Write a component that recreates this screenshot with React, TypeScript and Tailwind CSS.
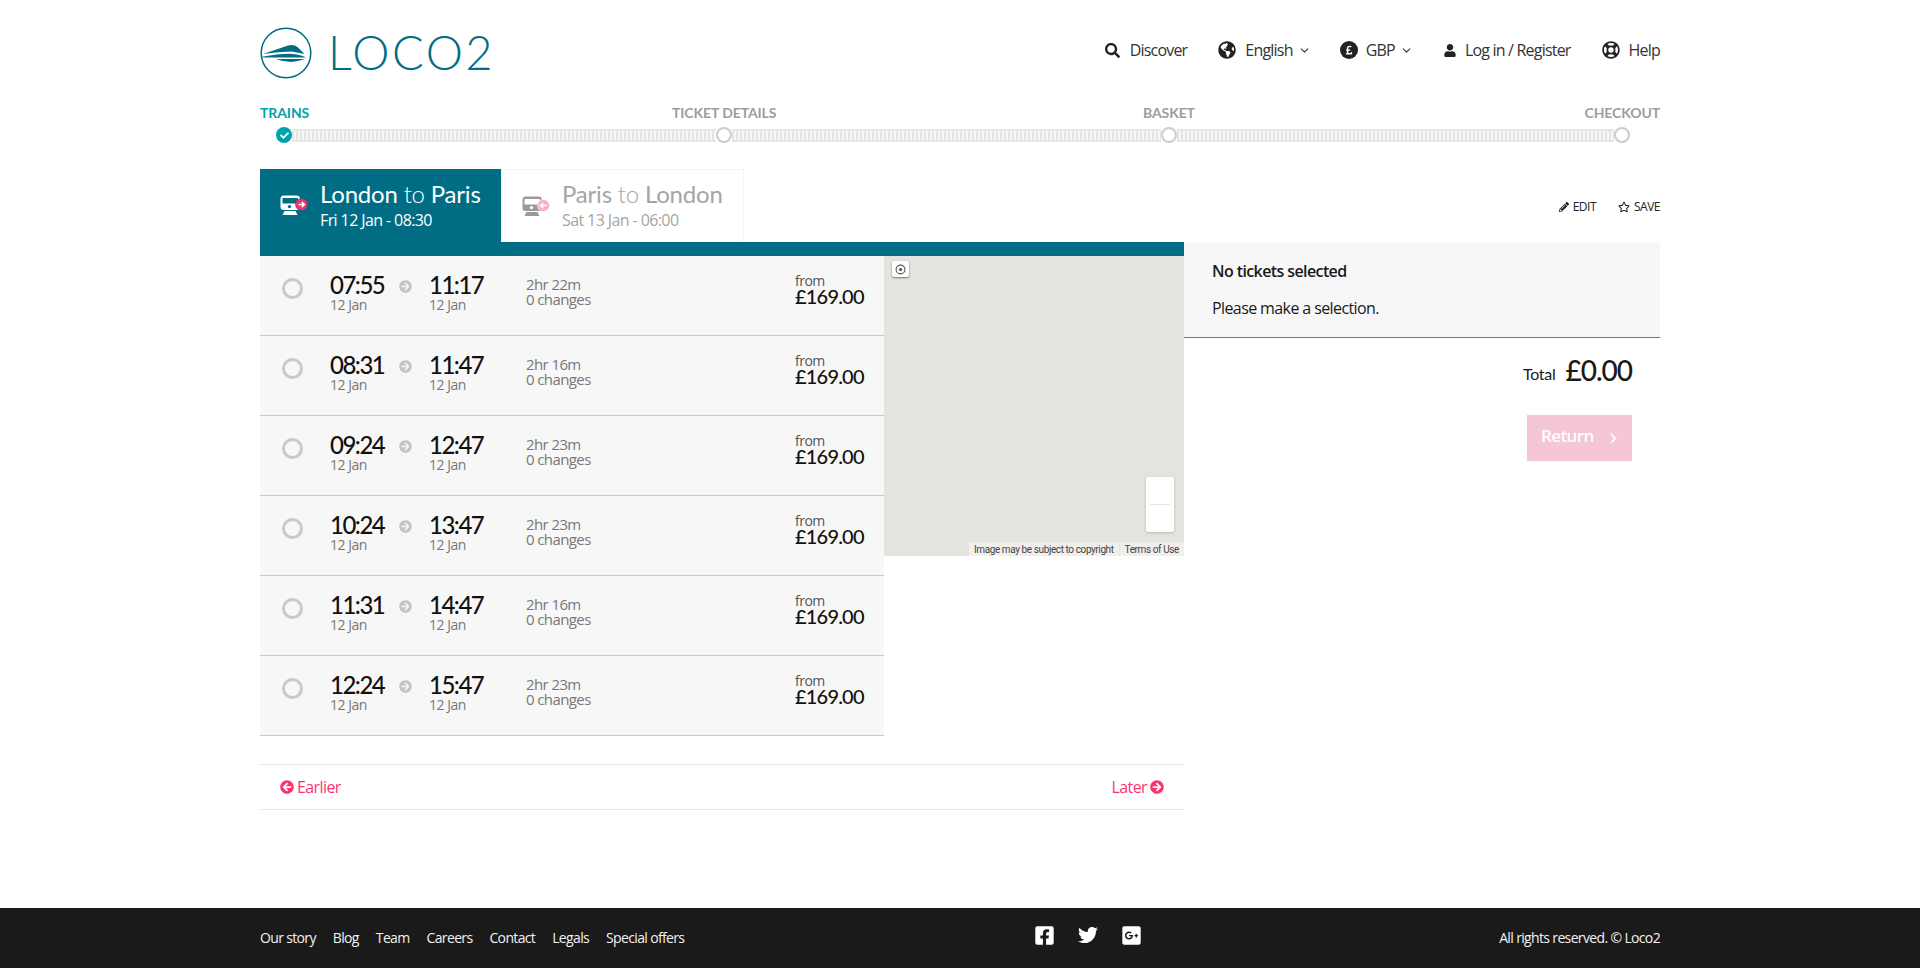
import React from "react";
import {
  FaSearch, FaGlobeAmericas, FaUser, FaRegLifeRing, FaPencilAlt, FaRegStar,
  FaArrowCircleRight, FaArrowCircleLeft, FaChevronRight, FaFacebookSquare,
  FaTwitter, FaGooglePlusSquare, FaCheck, FaPoundSign,
} from "react-icons/fa";
import { ChevronDown } from "lucide-react";

const OPEN = "font-['Open_Sans',sans-serif]";
const LATO = "font-['Lato',sans-serif]";

const rows = [
  ["07:55", "11:17", "2hr 22m"],
  ["08:31", "11:47", "2hr 16m"],
  ["09:24", "12:47", "2hr 23m"],
  ["10:24", "13:47", "2hr 23m"],
  ["11:31", "14:47", "2hr 16m"],
  ["12:24", "15:47", "2hr 23m"],
];

function Logo() {
  return (
    <svg width="52" height="52" viewBox="0 0 52 52" fill="none" className="shrink-0">
      <circle cx="26" cy="26" r="24.8" stroke="#006d84" strokeWidth="1.5" />
      <path d="M3 27 L28 18.5 Q34 17 38 20.5 L44.5 27 L32 24.5 Q18 24.5 3 27 Z" fill="#006d84" />
      <path d="M2 29.8 Q18 26.8 30 26.8 Q40 27.3 46 30.5 L2 30.5 Z" fill="#006d84" />
      <path d="M16 32 L45 32 Q38 34.5 31 35 Q23 34.8 16 32 Z" fill="#006d84" />
    </svg>
  );
}

function TrainIcon({ body, dot, badge, dir }: { body: string; dot: string; badge: string; dir: "r" | "l" }) {
  return (
    <svg width="28" height="21" viewBox="0 0 28 21" className="shrink-0">
      <path d="M3.5 0.5 H16.5 Q20 0.5 20 4 V12 Q20 15 17 15 H3.5 Q0.5 15 0.5 12 V4 Q0.5 0.5 3.5 0.5 Z" fill={body} />
      <rect x="2.5" y="3" width="15.5" height="5.5" rx="0.5" fill={dot} />
      <circle cx="9.5" cy="11.6" r="1.7" fill={dot} />
      <path d="M4.5 16 H15.5 L17.5 20 H2.5 Z" fill={body} />
      <circle cx="21.5" cy="9.5" r="6" fill={badge} stroke={dot} strokeWidth="0.6" />
      {dir === "r" ? (
        <path d="M18.5 9.5 H24 M21.8 7 L24.4 9.5 L21.8 12" stroke="#fff" strokeWidth="1.6" fill="none" />
      ) : (
        <path d="M24.5 9.5 H19 M21.2 7 L18.6 9.5 L21.2 12" stroke="#fff" strokeWidth="1.6" fill="none" />
      )}
    </svg>
  );
}

function Track({ w }: { w: string }) {
  return (
    <div className={`${w} h-[13px] border-y-2 border-[#e6e6e6] bg-[repeating-linear-gradient(90deg,#e4e4e4_0,#e4e4e4_2px,#f8f8f8_2px,#f8f8f8_4px)]`} />
  );
}

function Dot() {
  return <div className="w-[16px] h-[16px] rounded-full border-2 border-[#cccccc] bg-white shrink-0" />;
}

export default function App() {
  return (
    <div className={`min-h-[968px] flex flex-col bg-white text-[#1a1a1a] ${OPEN}`}>
      <div className="w-[1400px] mx-auto">
        {/* Header */}
        <header className="flex items-center justify-between pt-[27px] h-[79px]">
          <div className="flex items-center">
            <Logo />
            <span className={`${LATO} ml-[16px] -mt-[2px] text-[#006d84] text-[47px] leading-[52px] font-light tracking-[2.5px]`}>LOCO2</span>
          </div>
          <nav className="flex items-center gap-[31px] text-[16px] tracking-[-0.8px] text-[#333333] -mt-[6px]">
            <a className="flex items-center gap-[10px]"><FaSearch className="w-[15px] h-[15px] text-[#222222]" />Discover</a>
            <a className="flex items-center"><FaGlobeAmericas className="w-[18px] h-[18px] mr-[9px] text-[#222222]" />English<ChevronDown className="w-[13px] h-[13px] ml-[5px]" /></a>
            <a className="flex items-center -ml-[2px]">
              <span className="w-[18px] h-[18px] rounded-full bg-[#222222] flex items-center justify-center mr-[8px]"><FaPoundSign className="w-[10px] h-[10px] text-white" /></span>
              GBP<ChevronDown className="w-[13px] h-[13px] ml-[5px]" />
            </a>
            <a className="flex items-center gap-[9px]"><FaUser className="w-[12px] h-[13px] text-[#222222]" />Log in / Register</a>
            <a className="flex items-center gap-[9px]"><FaRegLifeRing className="w-[18px] h-[18px] text-[#222222]" />Help</a>
          </nav>
        </header>

        {/* Steps */}
        <div className={`${LATO} mt-[25px] flex text-[14px] leading-[17px] font-bold text-[#9d9d9d] tracking-[-0.1px]`}>
          <span className="text-[#00a3ad] w-[412px]">TRAINS</span>
          <span className="w-[471px]">TICKET DETAILS</span>
          <span className="w-[439px]">BASKET</span>
          <span className="flex-1 text-right">CHECKOUT</span>
        </div>
        <div className="mt-[6px] flex items-center pl-[16px] h-[16px]">
          <div className="w-[16px] h-[16px] rounded-full bg-[#00a3ad] flex items-center justify-center shrink-0"><FaCheck className="w-[9px] h-[9px] text-white" /></div>
          <Track w="w-[424px]" />
          <Dot />
          <Track w="w-[429px]" />
          <Dot />
          <Track w="w-[437px]" />
          <Dot />
        </div>

        {/* Tabs */}
        <div className="mt-[26px] flex items-start">
          <div className="w-[241px] h-[73px] bg-[#006d84] text-white flex items-center pl-[20px] gap-[12px]">
            <TrainIcon body="#ffffff" dot="#006d84" badge="#f0336f" dir="r" />
            <div className="pb-[2px]">
              <div className={`${LATO} text-[24px] leading-[30px] tracking-[-0.2px]`}>London <span className="font-light">to</span> Paris</div>
              <div className="mt-[1px] text-[16px] leading-[20px] tracking-[-0.6px]">Fri 12 Jan - 08:30</div>
            </div>
          </div>
          <div className="w-[243px] h-[73px] bg-white border border-b-0 border-[#f5f5f5] text-[#a5a5a5] flex items-center pl-[20px] gap-[12px]">
            <TrainIcon body="#9a9a9a" dot="#ffffff" badge="#fbb0c8" dir="l" />
            <div className="pb-[4px]">
              <div className={`${LATO} text-[24px] leading-[30px] tracking-[-0.2px]`}>Paris <span className="font-light">to</span> London</div>
              <div className="mt-[1px] text-[16px] leading-[20px] tracking-[-0.6px]">Sat 13 Jan - 06:00</div>
            </div>
          </div>
          <div className="flex-1 flex justify-end items-center gap-[22px] h-[73px] pt-[2px] text-[12px] tracking-[-0.5px] text-[#222222]">
            <span className="flex items-center gap-[4px]"><FaPencilAlt className="w-[10px] h-[10px]" />EDIT</span>
            <span className="flex items-center gap-[4px]"><FaRegStar className="w-[12px] h-[12px]" />SAVE</span>
          </div>
        </div>

        {/* Main */}
        <div className="flex items-start">
          <div className="w-[924px]">
            <div className="h-[14px] bg-[#006d84]" />
            <div className="flex items-start">
              <div className="w-[624px]">
                {rows.map((r) => (
                  <div key={r[0]} className="h-[80px] bg-[#f7f7f7] border-b border-[#c8c8c8] flex items-start pl-[22px] pr-[20px]">
                    <div className="mt-[22px] w-[21px] h-[21px] rounded-full border-[3px] border-[#c9c9c9] shrink-0" />
                    <div className="ml-[27px] mt-[16px] w-[55px] shrink-0">
                      <div className={`${LATO} text-[24px] leading-[26px] font-medium tracking-[-1.5px] text-[#111111] whitespace-nowrap`}>{r[0]}</div>
                      <div className="text-[14px] leading-[14px] tracking-[-0.5px] text-[#777777]">12 Jan</div>
                    </div>
                    <FaArrowCircleRight className="mt-[24px] ml-[14px] w-[13px] h-[13px] text-[#c4c4c4] shrink-0" />
                    <div className="ml-[17px] mt-[16px] w-[55px] shrink-0">
                      <div className={`${LATO} text-[24px] leading-[26px] font-medium tracking-[-1.5px] text-[#111111] whitespace-nowrap`}>{r[1]}</div>
                      <div className="text-[14px] leading-[14px] tracking-[-0.5px] text-[#777777]">12 Jan</div>
                    </div>
                    <div className="ml-[42px] mt-[21px] text-[15px] leading-[15px] tracking-[-0.6px] text-[#777777]">
                      <div>{r[2]}</div>
                      <div>0 changes</div>
                    </div>
                    <div className="ml-auto mt-[19px] w-[69px]">
                      <div className="text-[14px] leading-[11px] tracking-[-0.5px] text-[#555555]">from</div>
                      <div className={`${LATO} text-[20px] leading-[20px] font-medium tracking-[-0.8px] text-[#111111] whitespace-nowrap`}>£169.00</div>
                    </div>
                  </div>
                ))}
              </div>
              <div className="w-[300px] h-[300px] bg-[#e5e3df] relative">
                <div className="absolute left-[8px] top-[5px] w-[17px] h-[16px] bg-white rounded-[2px] shadow-[0_1px_2px_rgba(0,0,0,0.5)] flex items-center justify-center">
                  <svg width="11" height="11" viewBox="0 0 11 11"><circle cx="5.5" cy="5.5" r="4.4" fill="none" stroke="#555" strokeWidth="1.1" /><circle cx="5.5" cy="5.5" r="1.6" fill="#555" /></svg>
                </div>
                <div className="absolute right-[10px] top-[221px] w-[28px] h-[55px] bg-white rounded-[2px] shadow-[0_1px_3px_rgba(0,0,0,0.2)] flex items-center justify-center">
                  <div className="w-[20px] h-px bg-[#e6e6e6]" />
                </div>
                <div className="absolute right-0 bottom-0 h-[14px] flex items-center font-['Roboto',sans-serif] text-[10px] tracking-[-0.4px] text-[#444444]">
                  <span className="bg-[#f0efec] h-full px-[5px] pt-[1px] leading-[14px] mr-px">Image may be subject to copyright</span>
                  <span className="bg-[#f0efec] h-full px-[5px] pt-[1px] leading-[14px]">Terms of Use</span>
                </div>
              </div>
            </div>
            <div className="mt-[28px] h-[46px] border-y border-[#e6e6e6] flex items-center justify-between px-[20px] text-[16px] tracking-[-0.6px] text-[#fc3570]">
              <a className="flex items-center gap-[3px]"><FaArrowCircleLeft className="w-[14px] h-[14px]" />Earlier</a>
              <a className="flex items-center gap-[3px]">Later<FaArrowCircleRight className="w-[14px] h-[14px]" /></a>
            </div>
          </div>

          {/* Side */}
          <div className="flex-1">
            <div className="h-[96px] bg-[#f7f7f7] border-b border-[#d9426f] px-[28px] pt-[18px] text-[16px] tracking-[-0.6px]">
              <div className="font-semibold leading-[22px]">No tickets selected</div>
              <div className="mt-[15px] leading-[22px]">Please make a selection.</div>
            </div>
            <div className="flex flex-col items-end pr-[28px]">
              <div className="mt-[14px] flex items-end gap-[10px]">
                <span className={`${LATO} text-[16px] leading-[24px] tracking-[-0.3px] mb-[2px]`}>Total</span>
                <span className={`${LATO} text-[28px] leading-[36px] font-medium tracking-[-1px]`}>£0.00</span>
              </div>
              <button className="mt-[27px] w-[105px] h-[46px] bg-[#f5c6d6] text-white text-[17px] tracking-[-0.6px] font-semibold flex items-center pl-[14px] pb-[5px]">
                Return<FaChevronRight className="w-[11px] h-[11px] ml-[14px] mt-[5px]" />
              </button>
            </div>
          </div>
        </div>
      </div>

      {/* Footer */}
      <footer className="mt-auto h-[60px] bg-[#1a1a1a] text-[#f2f2f2] text-[14px] tracking-[-0.65px]">
        <div className="w-[1400px] mx-auto h-full flex items-center pb-[1px]">
          <div className="flex gap-[17px]">
            {["Our story", "Blog", "Team", "Careers", "Contact", "Legals", "Special offers"].map((t) => (
              <a key={t}>{t}</a>
            ))}
          </div>
          <div className="ml-[350px] flex items-center gap-[23px] text-white -mt-[5px]">
            <FaFacebookSquare className="w-[21px] h-[21px]" />
            <FaTwitter className="w-[20px] h-[20px]" />
            <FaGooglePlusSquare className="w-[21px] h-[21px]" />
          </div>
          <div className="ml-auto">All rights reserved. © Loco2</div>
        </div>
      </footer>
    </div>
  );
}
